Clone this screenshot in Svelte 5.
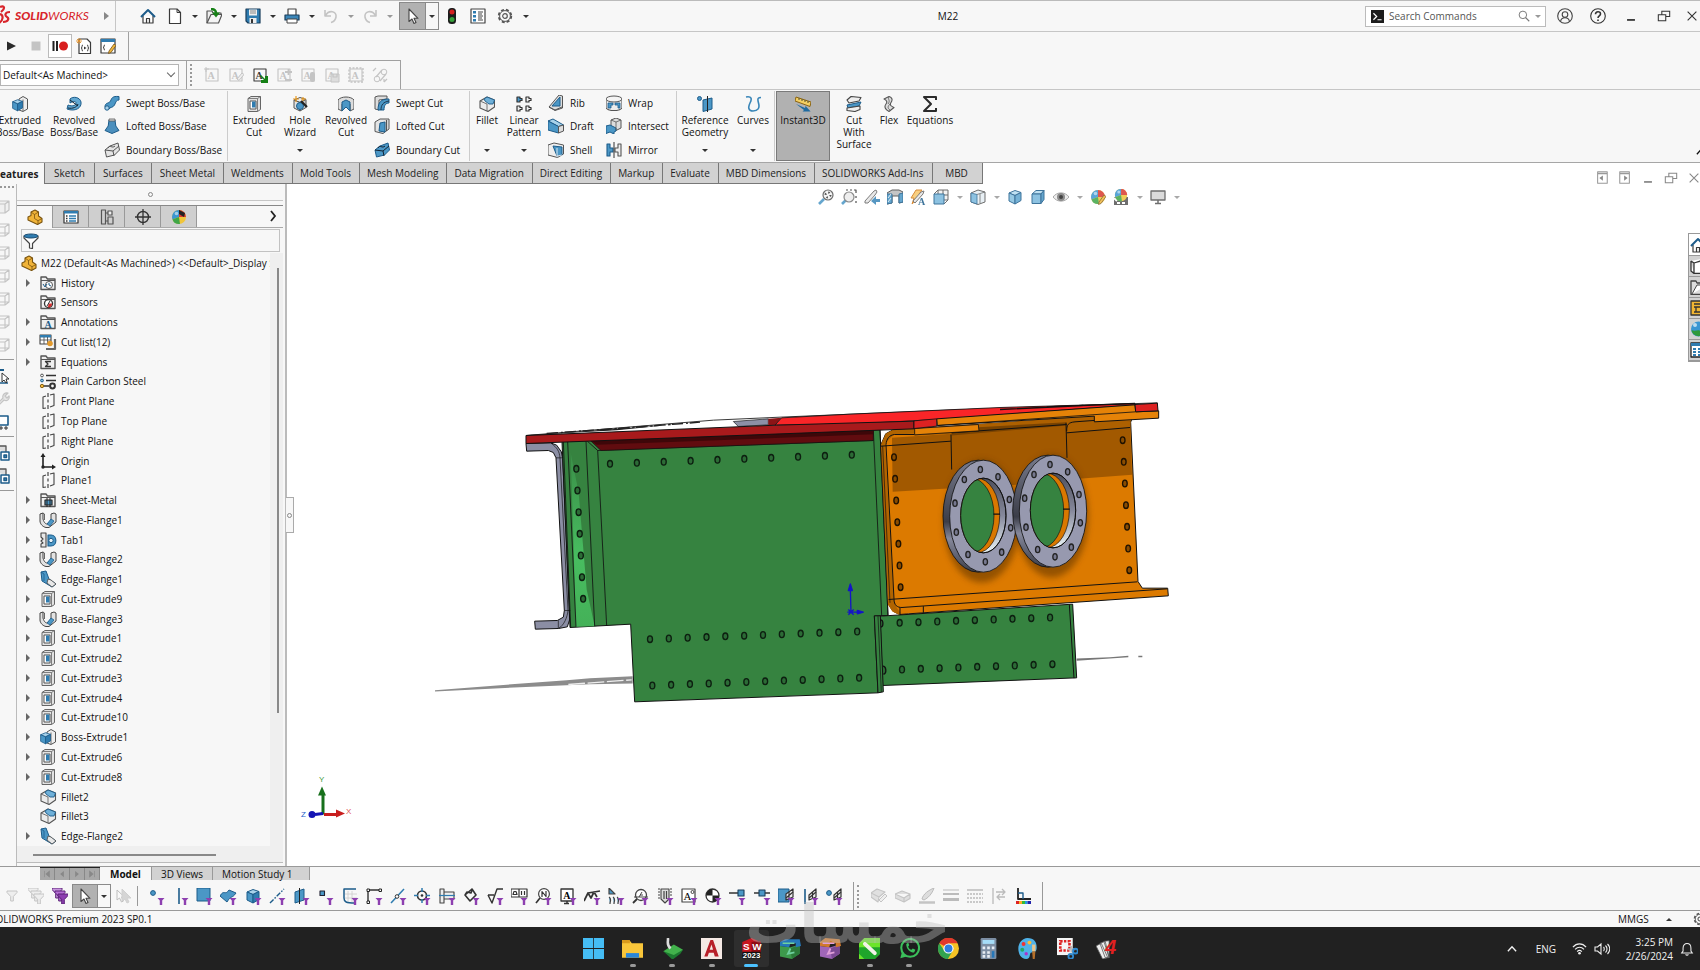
<script>
  const K = '#3a3a3a', B = '#4b97c6', D = '#1d5c8a', L = '#a8d2ea', G = '#c4c4c4', P = '#8d3fb0';
  const s = (d, c = K, w = 1.2, f = 'none') => `<path d="${d}" fill="${f}" stroke="${c}" stroke-width="${w}" stroke-linejoin="round"/>`;
  const cube = (a, b, c, o = K) => s('M2 5l4-3.500h8l-3 3.500z', o, 1, a) + s('M2 5h9v9.500H2z', o, 1, b) + s('M11 5l3-3.500v9l-3 4z', o, 1, c);
  const hex = (a, b, c, o = K) => s('M2 4l6-2.500 6 2-6 3z', o, 1, a) + s('M2 4l6 2.500v8.500l-6-3z', o, 1, b) + s('M8 6.500l6-3v8l-6 3.500z', o, 1, c);
  const fun = `<path d="M9.500 10h7l-2.300 2.600V17h-2.400v-4.400z" fill="${P}"/>`;
  const funnel = (x, y, c, f, k = 1) => `<path transform="translate(${x} ${y}) scale(${k})" d="M0 0h10v1.500L6.300 5.500V10H3.700V5.500L0 1.500z" fill="${f}" stroke="${c}" stroke-width="1"/>`;
  const folder = s('M1 14.500V2h5l1.500 2H15v10.500z', '#555', 1.4, '#efefef') + s('M1 5.500h14', '#555', 1);
  const ball = '<circle cx="8" cy="8" r="7" fill="#f0c53a"/><path d="M8 8V1a7 7 0 0 0-6.500 9.500z" fill="#3b96d2"/><path d="M8 8l-6.500 2.500A7 7 0 0 0 9 15z" fill="#3fa648"/><path d="M8 8V1a7 7 0 0 1 7 7z" fill="#d93a30"/><circle cx="5.500" cy="4.500" r="1.800" fill="#ffffff88"/>';
  const pencil = s('M9 13l5-7 2 1.500-5 7-2.500 1z', '#75531a', 0.8, '#f0b63c');
  const part = s('M1 8l3-1.500V3L8 1l3.500 2v4L15 9.500v3.500L10.500 15.500 1 11z', '#7a5410', 1.1, '#f0b338') + s('M4 3l3.500 2.500v4l3.500 2.200v3.600M7.500 5.500l4-2.500M11 11.700l4-2.200', '#7a5410', 0.8);
  const letterA = (c) => s('M2 2h12v12H2z', c, 1.1) + `<text x="3.500" y="12" font-size="10" font-family="Liberation Serif" font-weight="bold" fill="${c}">A</text>`;
  const ic = {
    home: s('M3 8v7h10V8M6.500 15v-4.500h3V15', K, 1.2, '#fff') + s('M1 9l7-7 7 7', D, 2),
    doc: s('M2.500 1h7.500l3.500 3.500V15.500h-11z', K, 1.2, '#fff') + s('M10 1v3.500h3.500', K, 1),
    open: s('M1 15V3h5l1 2h8v2', '#555', 1.2, '#eee') + s('M1 15l4-8.500h11L12.500 15z', '#555', 1.2, '#f4f4f4') + s('M5 1c4 0 5 2 5 4', '#168016', 2.4) + '<path d="M6 4.500h8l-4 5z" fill="#168016"/>',
    save: s('M1 1h14v14H3L1 13z', '#1a3e5c', 1.2, '#2f7cb0') + '<path d="M4 1.500h8v6H4zM4.500 10h7v5h-7z" fill="#eee"/><path d="M5 3h6M5 5h6" stroke="#888"/><path d="M6 11h2v4H6z" fill="#333"/>',
    print: s('M4 7V1h8v6', '#444', 1.2, '#fff') + s('M1 7h14v5H1z', '#1a3e5c', 1.2, '#3b86b8') + s('M3 11h10v4H3z', '#444', 1, '#fff'),
    undo: s('M2 2v6h6M2.500 7.500C6 1.500 14 3 13 9c-.5 3-3 5-5 5.500', G, 1.600),
    redo: s('M14 2v6H8M13.500 7.500C10 1.500 2 3 3 9c.5 3 3 5 5 5.500', G, 1.600),
    cursor: s('M4 1v12.500l3-2.500 2 4.500 2-1-2-4.200h4z', '#444', 1.1, '#fff'),
    traffic: '<rect x="4" y="0" width="8" height="16" rx="3.500" fill="#1c1c1c"/><circle cx="8" cy="4" r="2.500" fill="#d42020"/><circle cx="8" cy="11.500" r="2.500" fill="#36a23a"/>',
    options: s('M1 1h14v14H1z', '#444', 1.2, '#fff') + '<path d="M3 3h3v2.500H3zM3 7h3v2.500H3zM3 11h3v2.500H3z" fill="#2f7cb0"/><path d="M8 4h5M8 8h5M8 12h5M8 6h4M8 10h4" stroke="#444"/>',
    gear: '<circle cx="8" cy="8" r="6.200" fill="none" stroke="#555" stroke-width="2" stroke-dasharray="2.900 2"/><circle cx="8" cy="8" r="5.400" fill="#f7f7f7" stroke="#555"/><circle cx="8" cy="8" r="2.300" fill="none" stroke="#555" stroke-width="1.200"/>',
    play: '<path d="M3 3.500l9 4.500-9 4.500z" fill="#2b2b2b"/>', stop: '<path d="M3.500 3.500h9v9h-9z" fill="#c4c4c4"/>',
    rec: '<path d="M1.500 3v10M5 3v10" stroke="#222" stroke-width="2"/><circle cx="11.500" cy="8" r="4.500" fill="#d81f1f"/>',
    macroNew: s('M3 1h8l3.500 3.500V15.500H3z', K, 1.2, '#fff') + s('M7 7c-2 0 0 3-2 3 2 0 0 3 2 3M11 7c2 0 0 3 2 3-2 0 0 3-2 3', K, 1) + '<path d="M8 8.500l2.500 1.500L8 11.500z" fill="#333"/><path d="M3 0v6M0 3h6M1 1l4 4M5 1L1 5" stroke="#e0902a" stroke-width=".9"/>',
    macroEdit: s('M1 1h14v14H1z', K, 1.2, '#fff') + '<path d="M1 1h14v3H1z" fill="#2f7cb0"/>' + s('M5 7c-2 0 0 2.500-2 2.500 2 0 0 2.500 2 2.500', K, 1) + pencil,
    aNew: letterA(G) + s('M2 0v5M0 2h5', G, 1), aEdit: letterA(G) + s('M9 12l5-6 2 1.500-5 6z', G, 1, '#eee'),
    aGo: letterA(K) + '<path d="M9 8l4 4v-3h3v7H9v-3h3L8 9z" fill="#158015"/>',
    aAdd: letterA(G) + s('M9 5h7M12.500 2v6M9 13h7', G, 1.800), aLight: letterA(G) + `<rect x="10" y="5" width="5" height="10" rx="2" fill="${G}"/>`,
    aSave: letterA(G) + s('M7 7h8v8H7z', G, 1, '#ddd') + s('M9 7v3h4V7', G), aBox: letterA(G) + s('M1 1h14v14H1z', G, 1.400).replace('stroke-width', 'stroke-dasharray="2 1.500" stroke-width'),
    aLink: s('M4 10l6-7M8 14l6-7M1 4l3-3M12 15l3-3M12 15v-3', G, 1.200) + '<circle cx="5" cy="12" r="2.800" fill="none" stroke="#c4c4c4"/><circle cx="12" cy="5" r="2.800" fill="none" stroke="#c4c4c4"/>',
    boss: s('M7 3l4-2.500L15.500 3v10L11 15.500 7 14z', '#555', 1, '#eee') + s('M11 3.500V15', '#555', .8) + `<g transform="translate(-1 2.500) scale(.82)">${hex(L, B, '#2f7cb0', D)}</g>`,
    revBoss: s('M4 3C7 0 14 1 15 6c1 6-6 10-14 7l1-4c5 2 8 0 8-2s-3-2-6 0z', D, 1, '#62a8d2') + s('M4 4l8 6M2 12c5 1 9-1 10-4', '#123', 1),
    sweep: s('M1 12c0-5 4-3 5.500-6S8 1 15 1.500V5c-3 0-3 2-4.500 5s-5 2-5.500 4z', D, 1, '#4b97c6') + '<circle cx="3" cy="13" r="2.200" fill="#a8d2ea" stroke="#1d5c8a"/>',
    loft: s('M5 2h6l.8 6 3.200 4.500L8 15.500 1 12.500 4.200 8z', D, 1, '#4b8fbd') + s('M5 1h6v2H5z', '#555', .8, '#ddd'),
    bound: s('M1 8l5-4 8-3 1.500 7-5 5-8 2z', '#555', 1, '#e4e4e4') + s('M1 8l8 1 6-5M9 9l1 5M4 6c2-4 4 1 7-2', '#555', 1),
    boundCut: s('M1 8l5-4 8-3 1.500 7-5 5-8 2z', D, 1, '#4b97c6') + s('M1 8l8 1 6-5M9 9l1 5M4 6c2-4 4 1 7-2', '#123', 1),
    cut: s('M2 2.500L5 .5h9.500v13l-3 2H2z', '#666', 1, '#e2e2e2') + s('M2 2.500h9.500v13M11.500 2.500l3-2', '#666', .8) + s('M4 5h6v8H4z', '#555', 1, '#fff') + '<path d="M6 5.500h3.500v6H6z" fill="#2f7cb0"/>',
    hole: hex('#eee', '#e2e2e2', '#d0d0d0', '#555') + '<circle cx="8" cy="10" r="3.500" fill="#4b97c6" stroke="#1d5c8a"/><path d="M9 5l6 6" stroke="#222" stroke-width="2.200"/><path d="M4 0v6M1 3h6M11 1v4M9 3h5" stroke="#e79a22" stroke-width="1.200"/>',
    revCut: s('M0 4c3-4 13-4 16 0v9l-4 2V8H4v7l-4-2z', '#555', 1, '#dcdcdc') + s('M4 6l4-2 4 2v9l-4-4-4 4z', D, 1, B),
    sweepCut: s('M1 2l3-1h9v3L5 5v10l-4-1z', '#555', 1, '#ddd') + s('M4 15C4 7 7 4 15 4v4c-3 0-5 2-5 7z', D, 1, B) + s('M7 15c0-5 2-8 8-9', '#123', .8),
    loftCut: s('M1 4l5-3h9v10l-6 4.500-8-2z', '#555', 1, '#e4e4e4') + s('M6 5l5-1v10l-6-1z', D, 1, B) + s('M12.500 2v11', '#555'),
    fillet: s('M1 5l7-4 7.500 3v7L9 15.500 1 12z', '#555', 1.1, '#ececec') + s('M1 5l7 3v7', '#555', .8) + s('M5 3l3-2 7.500 3-1.500 4-4 0-4-3z', D, .9, '#6fb0d8'),
    pattern: [[0, 0, B], [9, 0, '#eee'], [0, 9, '#eee'], [9, 9, '#eee']].map(([x, y, f]) => `<g transform="translate(${x} ${y})">${s('M1 1h3v1.500h2v2H4V6H1z', '#333', 1.2, f)}</g>`).join(''),
    rib: s('M1 12L11 0l3.500 1v12L7 15.500z', '#555', 1, '#ddd') + s('M4 11l8-9v9z', D, 1, B) + s('M1 12l6 3 7-3', '#555', 1),
    draft: s('M0 3l5-2 10.500 6-5 1.500z', D, 1, L) + s('M0 3l10.500 5.500V15L0 12z', D, 1, B) + s('M10.500 8.500l5-1.500v6l-5 2z', '#555', 1, '#ddd'),
    shell: s('M0 3l6-2 9.500 2v9l-6 3.500L0 13z', '#555', 1, '#eee') + s('M5 4l9 1v8l-5 1z', D, 1, B) + s('M9 6v8l5-1', '#fff', .8),
    wrap: s('M0 4v9c3 3.500 13 3.500 16 0V4', '#555', 1.1, '#ececec') + '<ellipse cx="8" cy="4" rx="8" ry="3" fill="#f4f4f4" stroke="#555"/>' + s('M2 8h5v2H5v3H2zM9 8h5v5h-2v-3H9z', D, .8, B),
    intersect: s('M5 2l5-2 5 2v8l-5 2.500L5 10z', '#555', 1, '#ddd') + s('M0 8l4-1 6 3v3l-2 1v2l-4-2-4 1.500z', D, 1, B) + s('M10 4v8M5 2l5 2 5-2', '#555', .8),
    mirror: s('M1 2h3v4h3v4H4v4H1z', D, 1.1, B) + s('M15 2h-3v4h-3v4h3v4h3z', '#555', 1.1, '#eee') + s('M8 0v16', '#333', 1),
    refgeo: s('M6 4l9-2v11l-9 2.500z', D, 1, B) + s('M10.500 0v16', '#222', 1) + '<circle cx="2.500" cy="2.500" r="2" fill="#4b97c6" stroke="#1d5c8a"/>',
    curves: s('M1 1c6-1 6 2 4 6s-2 8 3 8 7-3 5.500-8 0-5.500 2.500-5.500', '#3a86b8', 1.600),
    instant: s('M1 1l15 5-1 4.500L0 5z', '#8a6414', 1, '#f4cf62') + s('M4 2v2M7 3v2M10 4v2M13 5v2', '#553', 1) + '<path d="M1 8l9 4 .6-2 5 5.500H7.500l1.500-1.500z" fill="#1f6aa0"/>',
    cutSurf: s('M1 4l4-3.500 10 1L13 5 3 7z', '#444', 1.1, '#eee') + s('M1 9l14-3-2 4-11 2z', D, 1, B) + s('M1 12l13-2v3.500l-5 2-8-1z', '#444', 1.1, '#eee'),
    flex: s('M3 3l5-2.500c3 1 4 3 2 6s1 4 3 5l-5 4c-4-2-5-5-3-7.500S5 4 3 3z', '#555', 1.1, '#ddd') + s('M8 1c-2 2 2 3-1 7M9 14c-3-2-2-4 0-6', '#555', .8),
    sigma: s('M14 4V1H2l7 7-7 7h12v-3', '#2b2b2b', 2),
    zoomFit: s('M1 15l5-5', B, 2.600) + '<circle cx="10" cy="6" r="5" fill="#f3f3f3" stroke="#555" stroke-width="1.200"/><circle cx="10" cy="6" r="2.500" fill="none" stroke="#333" stroke-width="2" stroke-dasharray="1.500 2.400"/>',
    zoomArea: s('M1 15l4-4', B, 2.600) + '<circle cx="8" cy="8" r="5" fill="#ececec" stroke="#777" stroke-width="1.200"/>' + s('M5 1h2M9 1h2M13 1h2v3M15 7v2M15 12v2', '#333', 1.2),
    prev: s('M1 12l9-10 2-1 1 2-2 3-7 8-3 0z', '#666', 1, '#e4e4e4') + '<path d="M16 10h-4V7l-5 5 5 4v-3h4z" fill="#3a86b8"/>',
    section: s('M0 4l5-3h7l4 2v10l-4 1V7H5v7l-5 1z', '#444', 1, '#bbb') + s('M0 5h5v9l-5 1zM12 5l4-1v9l-4 1z', D, 1, B) + s('M1 9l3-4M1 13l3-4', '#fff', .8),
    annot: s('M6 1h6l-3 4h4L2 15l2-6H1z', '#d07818', 1, '#f8c76a') + s('M3 12l8-9 3-1-1 3-8 9z', '#666', 1, '#e4e4e4') + `<text x="8" y="16" font-size="10" font-family="Liberation Serif" font-weight="bold" fill="${D}">A</text>`,
    orient: s('M5 1h10v10H5z', '#555', 1, '#f0f0f0') + s('M10 1v10M5 6h10M1 5l4-4M11 15l4-4', '#555', 1) + s('M1 5h10v10H1z', D, 1, '#7ab8dc'),
    display: s('M1 4l7-3 7 2v10l-7 2.500L1 13z', '#555', 1, '#e4eef4') + s('M1 4l6 1.500V15L1 13z', D, .8, '#7ab8dc') + s('M7 5.500L15 3M10 5v9', '#555', .8),
    hexBlue: hex('#b6dcf0', '#86c0e0', '#5fa5cf', D), cubeBlue: cube('#b6dcf0', '#7ab8dc', '#4b97c6', D),
    eye: s('M0 8c4-5.500 12-5.500 16 0-4 5.500-12 5.500-16 0z', '#999', 1, '#e8e8e8') + '<circle cx="8" cy="8" r="4" fill="#777"/><circle cx="8" cy="8" r="2" fill="#222"/>',
    ballEdit: ball + pencil, ball: ball + '<path d="M8 1l6 3-1 4-5-3z" fill="#222"/>', ballScene: '<path d="M1 8h14v8H1z" fill="#555"/><path d="M1 9l3 3M4 14h3M9 14h3" stroke="#fff" stroke-width="2"/>' + `<g transform="translate(1 -1) scale(.88)">${ball}</g>`,
    monitor: s('M1 2h14v9H1z', '#555', 1.3, '#d5d5d5') + s('M8 11v3M5 14.500h6', '#555', 1.500),
    part, propTab: s('M1 2h14v12H1z', '#333', 1.2, '#fff') + '<path d="M1 2h14v2.500H1z" fill="#2f7cb0"/><path d="M6 7h7M6 9.500h7M6 12h7" stroke="#2f7cb0" stroke-width="1.300"/><path d="M3 7h1.500M3 9.500h1.500M3 12h1.500" stroke="#333" stroke-width="1.300"/>',
    configTab: s('M2.500 1h4v14h-4zM6.500 4H9M6.500 12H9M9 8h5v7H9z', '#555', 1.2) + s('M9 2h4v4H9z', '#555', 1.200, '#eee'),
    target: '<circle cx="8" cy="8" r="5.500" fill="none" stroke="#333" stroke-width="1.400"/>' + s('M0 8h16M8 0v16', '#333', 1.300),
    history: folder + '<circle cx="9" cy="10" r="3.500" fill="#fff" stroke="#555"/>' + s('M9 8v2l2 1M3 9l2 3 2-3', D, 1),
    sensor: folder + '<circle cx="8.500" cy="9.500" r="4" fill="#fff" stroke="#333" stroke-width="1.300"/><path d="M8.500 9.500l3.500 0a4 4 0 0 1-4 4z" fill="#d83030"/><path d="M7 12l3-5" stroke="#333"/>',
    annotF: folder + `<text x="4.500" y="13.500" font-size="10" font-family="Liberation Serif" font-weight="bold" fill="${D}">A</text>`,
    eqF: folder + s('M11 7.500H5.500L8 10l-2.500 2.500H11', '#333', 1.300),
    cutlist: s('M0 1h11v9H0z', '#444', 1.1, '#fff') + '<path d="M0 1h11v2.500H0z" fill="#2f7cb0"/>' + s('M0 6h11M4 3v7M7.500 3v7', '#444', .8) + s('M15 5v10H6', '#666', 2.200) + '<circle cx="10" cy="9.500" r="2.800" fill="#e39a2c"/>',
    material: '<path d="M6 2.500h10M6 7.500h10M4 13h5" stroke="#333" stroke-width="1.600"/><circle cx="2" cy="2.500" r="1.400" fill="#fff" stroke="#555"/><circle cx="2" cy="7.500" r="1.400" fill="#8cc3e2" stroke="#1d5c8a"/><circle cx="2" cy="13" r="1.700" fill="#f0b63c" stroke="#8a6414"/><circle cx="12.500" cy="13" r="2.400" fill="none" stroke="#333" stroke-width="2"/>',
    plane: s('M6 15l-3 .5V4l3-1M10 2l4-1v11.500l-4 1.500', '#444', 1.1) + s('M8 0v4M8 6.500v3M8 12v4', '#444', 1.2),
    origin: s('M3 2v12h11', '#222', 1.600) + '<path d="M3 0l2.500 4h-5zM16 14l-4-2.500v5z" fill="#222"/><circle cx="3" cy="14" r="1.700" fill="#222"/>',
    sheet: folder + s('M5 8h7v5H5z', '#222', 1.2, B) + s('M7 6v9M10 6v9', '#222', 1),
    base: s('M0 2l3-1v6c1 4 3 5 4 5l4-3V2l3-1 2 1v8l-7 5.500H6C3 15 0 12 0 9z', '#444', 1, '#e2e2e2') + s('M7 12l4-5 3 2-4 5z', D, .8, B) + s('M3 1l1.500 1v6', '#444', .8),
    tab: s('M1 1h5v14H1V12l2-1-2-2 2-2-2-2z', '#444', 1.1, '#e8e8e8') + s('M8 3h3c6.500 0 6.500 11 0 11H8z', D, 1.1, B) + '<circle cx="11" cy="8.500" r="2.200" fill="#e8f2f8" stroke="#1d5c8a"/>',
    edge: s('M1 1l5-1 3 8 7 5-4 3-10-6z', D, 1, B) + s('M8 8l3 1 5 4-4 3-5-4z', '#555', .9, '#e8e8e8') + s('M1 1l3 2v7', D, .8),
    filterAll: funnel(3, 3, G, '#eee'), filterMany: funnel(0, 0, G, '#eee') + funnel(3, 3, G, '#eee') + funnel(6, 6, G, '#eee'),
    filterPurple: funnel(0, 0, '#5c2278', '#c795dd') + funnel(3, 3, '#5c2278', '#b56fd4') + funnel(6, 6, '#5c2278', P),
    cursors: `<g opacity=".35">${s('M2 2v10l2.500-2 2 4 2-1-2-4h3z', '#555', 1, '#fff') + s('M7 1v12l3-2 2 4 2-1-2-4h4z', '#888', 1, '#999')}</g>`,
    fVertex: '<circle cx="5" cy="5" r="2.400" fill="#4b97c6" stroke="#1d5c8a"/>' + fun, fEdge: s('M7 0v16', D, 1.600) + fun,
    fFace: s('M1 0h13v13H1z', D, 1, B) + fun, fSurf: s('M0 8c4-7 5 0 9-6l7 3c-4 6-5 2-9 9z', D, 1, B) + fun,
    fBody: hex(L, B, '#2f7cb0', D) + fun, fAxis: s('M1 15L15 1', D, 1.400).replace('stroke-width', 'stroke-dasharray="5 1.500 1.500 1.500" stroke-width') + fun,
    fPlane: s('M2 4l9-3v11l-9 3z', D, 1, B) + s('M6.500 0v16', '#222', 1) + fun, fPoint: s('M3 3h4.500v4.500H3z', '#223', 1.100, B) + fun,
    fSketch: s('M6 3v11M10 3v11M3 6h12M3 10h12', '#ccc', .8) + s('M14 1H2v9c0 4 2 5 11 5', D, 1.500) + fun,
    fSeg: s('M2 2h12M2 2v12', '#333', 1.400) + s('M1 1h2.500v2.500H1zM13 1h2.500v2.500H13zM1 13h2.500v2.500H1z', '#222', 1, '#fff') + fun,
    fMid: s('M1 15L14 1', '#2f7cb0', 1.500) + '<circle cx="7" cy="8.500" r="1.800" fill="#fff" stroke="#333"/>' + fun,
    fCenter: '<circle cx="8" cy="7.500" r="4.500" fill="none" stroke="#333" stroke-width="1.600"/>' + s('M0 7.500h4M12 7.500h4M8 0v4M8 11v4', '#2f7cb0', 1.500) + '<circle cx="8" cy="7.500" r="1.300" fill="#333"/>' + fun,
    fDim: s('M1 1h4v14H1zM5 4h10v7H5z', '#444', 1.1, '#eee') + s('M0 7.500h16', '#2f7cb0', 1.200) + fun,
    fWeld: s('M2 7l5 6 6-6-4-6zM2 7l2-3 4 1 1-3', '#333', 1.600) + fun, fSurfFin: s('M1 7l4 8L10 1h6M1 7h6', '#333', 1.400) + fun,
    fTol: s('M0 1h16v8H0zM8 1v8', '#333', 1.2, '#fff') + s('M2 6.500h4l-1-3H3zM10.500 3v4M13.500 3v4', '#333', 1.200) + fun,
    fNote: s('M1 15l4-5', '#333', 1.700) + '<circle cx="9" cy="6" r="5.400" fill="#fff" stroke="#444" stroke-width="1.200"/>' + s('M7 9V3.500l4 5V3', '#333', 1.200) + fun,
    fA: s('M1 1h12v12H1z', '#333', 1.3, '#fff') + '<text x="3.200" y="11" font-size="10" font-family="Liberation Serif" font-weight="bold">A</text>' + s('M4 15.500h5M7 13v2', '#333', 1.500) + fun,
    fBead: s('M0 13l4-8 3 5 3-6 3 5M4 5l12-2', '#333', 1.700) + fun, fCos: s('M1 0v6h6zM1 9c3 2 1 4 1 7M5 9c3 2 1 4 1 7M9 9c3 2 1 4 1 7', '#444', 1.2, B) + fun,
    fZoomA: s('M1 15l4-4', '#333', 1.800) + '<circle cx="9" cy="7" r="5.500" fill="#fff" stroke="#444" stroke-width="1.300"/>' + s('M2 9h14M10 4l-3 5M8 7h3', '#444', 1) + fun,
    fDowel: s('M4 1h8v10l-4 4-4-4z', '#444', 1.1, '#ddd') + s('M1 1h2M1 4h2M1 7h2M1 10h2M13 1h2M13 4h2M13 7h2M7 3v8M9.500 3v8', '#444', 1.200) + fun,
    fDatum: s('M1 1h13v13H1z', '#444', 1.200, '#fff') + '<text x="2.500" y="12" font-size="11" font-family="Liberation Serif">A</text><circle cx="11.500" cy="4" r="1.500" fill="none" stroke="#444"/>' + fun,
    fMass: '<circle cx="7.500" cy="7.500" r="6.500" fill="#fff" stroke="#333" stroke-width="1.300"/><path d="M7.500 7.500V1a6.500 6.500 0 0 0-6.500 6.500zM7.500 7.500V14A6.500 6.500 0 0 0 14 7.500z" fill="#222"/>' + fun,
    fConn: s('M0 5h9', '#333', 1.500) + s('M9 2h6v6H9z', '#1a3e5c', 1.100, B) + fun, fConn2: s('M0 5h16', '#333', 1.500) + s('M5 2h6v6H5z', '#1a3e5c', 1.100, B) + fun,
    fWedge: s('M0 1h11v13H0z', D, 1, B) + s('M8 6l7-5v8l-7 3z', '#333', 1.200, '#eee') + s('M8 10l7-6M11 4v7', '#333') + fun,
    fWedge2: s('M3 1v15', D, 1.600) + s('M7 7l7-6v8l-7 3z', '#333', 1.200, '#eee') + s('M7 10l7-6M10.500 4v6', '#333') + fun,
    fWedge3: '<circle cx="3" cy="5" r="2.400" fill="#4b97c6" stroke="#1d5c8a"/>' + s('M8 7l7-6v8l-7 3z', '#333', 1.200, '#eee') + s('M8 10l7-6M11.500 4v6', '#333') + fun,
    gBoxEdit: s('M0 5l6-4 8 3-6 5zM0 5v4l7 5 1-5', G, 1.1, '#e0e0e0') + s('M8 12l6-6 2 2-6 6z', G, 1, '#eee'), gBox: s('M0 6l7-3 8 3-6 4zM0 6v4l9 4 6-3.500V6M9 10v4', G, 1.1, '#dedede'),
    gBrush: s('M3 11c1-5 7-9 12-11-2 6-6 10-10 12z', '#bbb', 1, '#ddd') + s('M0 14.500h16', G, 2.500), gLines: s('M0 2h16', '#bbb', 1) + s('M0 6h16', '#bbb', 2) + s('M0 11.500h16', '#bbb', 3),
    gDash: s('M0 2h16', '#bbb', 1.500) + s('M0 6h16M0 10h16M0 14h16', '#bbb', 1.500).replace('stroke-width', 'stroke-dasharray="2 1" stroke-width'), gSwap: s('M2 0v16M5 4h9M11 1l3 3-3 3M14 9H6M9 6L6 9l3 3', '#bbb', 1.300),
    colorAxis: s('M3 0v11h13', '#222', 1.800) + s('M3 5h5v6', D, 1.400) + '<path d="M1 13h3v3H1z" fill="#d22"/><path d="M4 13h3v3H4z" fill="#fa2"/><path d="M7 13h3v3H7z" fill="#3b3"/><path d="M10 13h2.500v3H10z" fill="#29d"/><path d="M12.500 13H16v3h-3.500z" fill="#22a"/>',
    wire: s('M1 5l4-3h10v9l-4 3H1zM1 5h10v9M11 5l4-3', G, 1.2, '#f0f0f0'), wire2: s('M1 5h10v9H1zM5 2h10v9H5zM1 5l4-3M11 5l4-3M11 14l4-3M1 14l4-3', G, 1.1),
    sel: s('M1 2h9', D, 2) + s('M1 15h13', D, 1.500) + s('M8 5v9l2-2 2 3 1-1-1-3h3z', '#333', 1, '#fff'), wrench: s('M2 14l7-7c-1-3 2-6 5-5l-3 3 2 2 2-2c1 3-2 6-5 4l-6 6z', G, 1.200, '#e6e6e6'),
    screen: s('M0 2h14v9H0z', D, 1.600, '#fff') + s('M6 13h2v2H6zM11 13h2v2h-2z', '#333', 1), box2: s('M2 4l3-3h7v6M2 4v8h4', '#555', 1.3, '#ddd') + s('M7 7h8v8H7z', D, 1.500, '#fff') + s('M10 10h2.500v2.500H10z', D, 1.500, B),
    library: s('M1 3l3 2v10.500h11V4l-4-3M4 5l6-2 5 1M1 3v10l3 2.500', '#333', 1.3, '#fff'), folderOpen: s('M1 15.500V2h5l1 2h9v11.500z', '#444', 1.3, '#ddd') + s('M2 15l5-9h10', '#444', 1, '#fff'),
    palette: s('M1 1h14v14H1z', '#333', 1.300, '#f2b632') + s('M4 4h8M4 7h8M6 7v5M4 12h8', '#333', 1.300), globe: '<circle cx="8.500" cy="8" r="7.500" fill="#3b96d2"/><path d="M1.500 9c4 2 6-1 9 1s4-2 5 0c-1 7-13 7-14-1z" fill="#2e9a3c"/><circle cx="5" cy="4" r="2" fill="#ffffffaa"/>',
    table: s('M1 1h14v14H1z', '#222', 1.300, '#fff') + '<path d="M1 1h14v3H1z" fill="#2f7cb0"/><path d="M3 6h3v2H3zM8 6h3v2H8zM3 9h3v2H3zM8 9h3v2H8zM3 12h3v2H3zM8 12h3v2H8z" fill="#2f7cb0"/>',
    glass: '<circle cx="6.500" cy="6.500" r="5" fill="none" stroke="#777" stroke-width="1.300"/><path d="M10 10l5 5" stroke="#777" stroke-width="1.500"/>',
    prompt: '<path d="M0 0h16v16H0z" fill="#1c1c1c"/><path d="M3 4l4 4-4 4M8 12h5" fill="none" stroke="#fff" stroke-width="1.500"/>',
    user: '<circle cx="8" cy="8" r="7.300" fill="none" stroke="#444" stroke-width="1.100"/><circle cx="8" cy="6.500" r="2.800" fill="none" stroke="#444" stroke-width="1.100"/><path d="M3.500 13.500c1-5 8-5 9 0" fill="none" stroke="#444" stroke-width="1.100"/>',
    help: '<circle cx="8" cy="8" r="7.300" fill="none" stroke="#333" stroke-width="1.100"/><path d="M5.500 6.300c0-3.500 5-3.300 5-.4 0 2-2.500 1.800-2.500 4M8 11.500v1.600" fill="none" stroke="#333" stroke-width="1.600"/>',
    min: '<path d="M3.500 12.500h9" stroke="currentColor" stroke-width="2"/>', restore: '<path d="M5.500 6V2.500h9v6H10M1.500 6.500h8.500v7H1.500z" fill="none" stroke="currentColor" stroke-width="1.200"/>',
    close: '<path d="M3 3l10 10M13 3L3 13" stroke="currentColor" stroke-width="1.300"/>',
    paneL: s('M3 1h11v13H3zM3 3h11', '#999', 1.2) + '<path d="M9 5v6L5 8z" fill="#888"/>', paneR: s('M2 1h11v13H2zM2 3h11', '#999', 1.2) + '<path d="M7 5v6l4-3z" fill="#888"/>',
    funnel: s('M1 3v2l5.500 5.500V15l3 .5v-5L15 5V3z', '#444', 1.200, '#fff') + '<ellipse cx="8" cy="3" rx="7" ry="2" fill="#2f7cb0" stroke="#1d4e73"/>',
    win: '<path d="M0 0h7.700v7.700H0zM8.300 0H16v7.700H8.300zM0 8.300h7.700V16H0zM8.300 8.300H16V16H8.300z" fill="#45bdf5"/>',
    explorer: '<path d="M0 2h6l1.500 2H16v11H0z" fill="#f9c63a"/><path d="M0 1.500h6V4H0z" fill="#d99a1c"/><path d="M3 15v-3.500h10V15z" fill="#2c87d8"/>',
    green: '<path d="M1 10l8-5 7 4-7 6z" fill="#42b24c"/><path d="M1 10l8 3 7-4-2 3-6 4.500z" fill="#1d7a30"/><path d="M6.500 8C3 5 5 3 4.500 0" stroke="#ddd" stroke-width="2" fill="none"/>',
    acad: '<path d="M0 0h16v16H0z" fill="#f5e9e4"/><path d="M2.500 14L7.200 1.500h2L13.500 14h-3l-.8-2.700H6L5 14z" fill="#b81f28"/><path d="M6.600 9h2.600L8 5z" fill="#f5e9e4"/>',
    sw: '<path d="M1 3l7-3 7 3v8l-5 3-9-2z" fill="#c8151f"/><path d="M8 3l7-1v9l-5 3-2-3z" fill="#8d0c14"/><text x="1.500" y="9" font-size="7.500" font-weight="bold" font-family="Liberation Sans" fill="#fff">S W</text><path d="M1 10.500h14v5H1z" fill="#111"/><text x="1.400" y="15.300" font-size="6" font-weight="bold" font-family="Liberation Sans" fill="#fff">2023</text>',
    app1: '<path d="M0 6l8 1 7-2v7l-6 4-9-2z" fill="#3d9a4c"/><path d="M8 8l7-3v7l-6 4z" fill="#2c7a3a"/><path d="M0 3l4-2 11 0 1 5-4 1 0-3-4 0-1 3-7-1z" fill="#2577b8"/><path d="M2 4h9M8 8l-2 4 5-1" fill="none" stroke="#6fd0a0" stroke-width="1.300"/>',
    app2: '<path d="M0 6l8 1 7-2v7l-6 4-9-2z" fill="#a066b8"/><path d="M8 8l7-3v7l-6 4z" fill="#7c4a94"/><path d="M0 3l4-3 11 1 1 5-4 1 0-3-4 0-1 3-7-1z" fill="#d0792c"/><path d="M2 4h9M8 8l-2 4 5-1" fill="none" stroke="#e0a0d8" stroke-width="1.300"/>',
    camt: '<path d="M0 4l4-4h12v12l-4 4H0z" fill="#6be52a"/><path d="M0 7h16v5l-4 4H4l-4-4z" fill="#1fa52b"/><path d="M4.500 4.500l7.500 7" stroke="#f2f2e8" stroke-width="3" stroke-linecap="round"/>',
    whats: '<circle cx="8.500" cy="7.500" r="6.800" fill="#1d1d1d" stroke="#3bbf5b" stroke-width="1.600"/><path d="M1 15.500l1.300-5 3.500 3.500z" fill="#3bbf5b"/><path d="M5.500 4.500c0 4 3 6.500 6 6.500l1-2-2-1-1 1c-1 0-2.500-1.500-2.500-2.500l.8-1-.8-2z" fill="#3bbf5b"/>',
    chrome: '<circle cx="8" cy="8" r="8" fill="#f6c324"/><path d="M8 8L1 4a8 8 0 0 1 14 0H8z" fill="#e2382c"/><path d="M1 4a8 8 0 0 0 6.500 12l3.500-6-6 0z" fill="#32a350"/><circle cx="8" cy="8" r="3.900" fill="#fff"/><circle cx="8" cy="8" r="3" fill="#2f7de0"/>',
    calc: '<rect x="2" y="0" width="12" height="16" rx="1" fill="#7c8ea3"/><path d="M3.500 1.500h9v3h-9z" fill="#a5dcf7"/><path d="M3.500 6.500h2v2h-2zM7 6.500h2v2H7zM10.500 6.500h2v2h-2zM3.500 10h2v2h-2zM7 10h2v2H7zM3.500 13h2v2h-2zM7 13h2v2H7z" fill="#e8eef5"/><path d="M10.500 10h2v5h-2z" fill="#2677b8"/>',
    paint: '<path d="M8 0c5 0 7 3 7 7s-2 4-4 4 0 5-4 5-6-4-6-8 3-8 7-8z" fill="#4fb2e8"/><circle cx="5" cy="4.500" r="1.500" fill="#e33"/><circle cx="9.500" cy="3.500" r="1.500" fill="#fb3"/><circle cx="4" cy="9" r="1.500" fill="#2a6"/><circle cx="7" cy="12" r="1.300" fill="#a3c"/><path d="M11.500 5h2.500v5h-2.500z" fill="#e9c48a"/><path d="M11.500 10h2.500l-.5 6h-1.500z" fill="#b5702a"/>',
    snip: '<path d="M0 0h12v13H0z" fill="#f4f4f4"/><path d="M2.500 2.500h7v7h-7z" fill="none" stroke="#d22" stroke-width="2" stroke-dasharray="1.800 1"/><path d="M8 8.500h6M11 6v5" stroke="#bbb" stroke-width="1.500"/><circle cx="14" cy="10" r="1.800" fill="none" stroke="#2f8ad0" stroke-width="1.400"/><circle cx="10.500" cy="14" r="1.800" fill="none" stroke="#2f8ad0" stroke-width="1.400"/>',
    cards: '<path d="M0 6l4-2 5 11-4 1zM3 4l4-1.500L10 15H7zM6 2.500L10 2v13z" fill="#eee" stroke="#555" stroke-width=".6"/><text x="7" y="12" font-size="15" font-weight="bold" font-style="italic" font-family="Liberation Sans" fill="#e02020">4</text>',
    up: '<path d="M2.500 11L8 5l5.500 6" fill="none" stroke="currentColor" stroke-width="1.800"/>',
    wifi: '<path d="M1 6.500c4-4.500 10-4.500 14 0M3.300 9c3-3 6.500-3 9.500 0M5.500 11.300c1.500-1.500 3.500-1.500 5 0" fill="none" stroke="#eee" stroke-width="1.300"/><circle cx="8" cy="13" r="1.400" fill="#eee"/>',
    vol: '<path d="M1 6h2.500L7 3v10L3.500 10H1zM9.500 6c1 1 1 3 0 4M11.500 4.500c2 2 2 5 0 7M13.500 3c3 3 3 7 0 10" fill="none" stroke="#eee" stroke-width="1.100"/>',
    bell: '<path d="M2 12.500l1.500-2V7c0-7 9-7 9 0v3.500l1.500 2zM6.500 14c.5 1.500 2.500 1.500 3 0" fill="none" stroke="#eee" stroke-width="1.200"/>',
    first: '<path d="M4 3v10M12 3v10L6 8z" fill="#888" stroke="#888"/>', back: '<path d="M11 3v10L5 8z" fill="#888"/>', fwd: '<path d="M5 3v10l6-5z" fill="#888"/>', last: '<path d="M12 3v10M4 3v10l6-5z" fill="#888" stroke="#888"/>',
  };
  const fileTools = [['doc', 'New'], ['open', 'Open'], ['save', 'Save'], ['print', 'Print'], ['undo', 'Undo'], ['redo', 'Redo']];
  const ann = ['aNew', 'aEdit', 'aGo', 'aAdd', 'aLight', 'aSave', 'aBox', 'aLink'];
  const ribbon = [
    { first: true, big: [['boss', ['Extruded', 'Boss/Base'], 54], ['revBoss', ['Revolved', 'Boss/Base'], 54]], lists: [{ w: 126, i: [['sweep', 'Swept Boss/Base'], ['loft', 'Lofted Boss/Base'], ['bound', 'Boundary Boss/Base']] }] },
    { big: [['cut', ['Extruded', 'Cut'], 50], ['hole', ['Hole', 'Wizard'], 42, 1], ['revCut', ['Revolved', 'Cut'], 50]], lists: [{ w: 98, i: [['sweepCut', 'Swept Cut'], ['loftCut', 'Lofted Cut'], ['boundCut', 'Boundary Cut']] }] },
    { big: [['fillet', ['Fillet'], 32, 1], ['pattern', ['Linear', 'Pattern'], 42, 1]], lists: [{ w: 58, i: [['rib', 'Rib'], ['draft', 'Draft'], ['shell', 'Shell']] }, { w: 73, i: [['wrap', 'Wrap'], ['intersect', 'Intersect'], ['mirror', 'Mirror']] }] },
    { big: [['refgeo', ['Reference', 'Geometry'], 54, 1], ['curves', ['Curves'], 42, 1]], lists: [] },
    { big: [['instant', ['Instant3D'], 54]], lists: [], on: true },
    { big: [['cutSurf', ['Cut', 'With', 'Surface'], 42], ['flex', ['Flex'], 28], ['sigma', ['Equations'], 54]], lists: [], last: true },
  ];
  const tabs = ['Features', 'Sketch', 'Surfaces', 'Sheet Metal', 'Weldments', 'Mold Tools', 'Mesh Modeling', 'Data Migration', 'Direct Editing', 'Markup', 'Evaluate', 'MBD Dimensions', 'SOLIDWORKS Add-Ins', 'MBD'];
  const tree = [['history', 'History', 1], ['sensor', 'Sensors'], ['annotF', 'Annotations', 1], ['cutlist', 'Cut list(12)', 1], ['eqF', 'Equations', 1], ['material', 'Plain Carbon Steel'], ['plane', 'Front Plane'], ['plane', 'Top Plane'], ['plane', 'Right Plane'], ['origin', 'Origin'], ['plane', 'Plane1'], ['sheet', 'Sheet-Metal', 1], ['base', 'Base-Flange1', 1], ['tab', 'Tab1', 1], ['base', 'Base-Flange2', 1], ['edge', 'Edge-Flange1', 1], ['cut', 'Cut-Extrude9', 1], ['base', 'Base-Flange3', 1], ['cut', 'Cut-Extrude1', 1], ['cut', 'Cut-Extrude2', 1], ['cut', 'Cut-Extrude3', 1], ['cut', 'Cut-Extrude4', 1], ['cut', 'Cut-Extrude10', 1], ['boss', 'Boss-Extrude1', 1], ['cut', 'Cut-Extrude6', 1], ['cut', 'Cut-Extrude8', 1], ['fillet', 'Fillet2'], ['fillet', 'Fillet3'], ['edge', 'Edge-Flange2', 1]];
  const side = ['wire', 'wire2', 'wire2', 'wire2', 'wire2', 'wire2', 'wire2', '|', 'sel', 'wrench', 'screen', '|', 'box2', 'box2', '|'];
  const viewTools = [['zoomFit'], ['zoomArea'], ['prev'], ['section'], ['annot'], ['orient', 1], ['display', 1], ['hexBlue'], ['cubeBlue'], ['eye', 1], ['ballEdit'], ['ballScene', 1], ['monitor', 1]];
  const filters = ['fVertex', 'fEdge', 'fFace', 'fSurf', 'fBody', 'fAxis', 'fPlane', 'fPoint', 'fSketch', 'fSeg', 'fMid', 'fCenter', 'fDim', 'fWeld', 'fSurfFin', 'fTol', 'fNote', 'fA', 'fBead', 'fCos', 'fZoomA', 'fDowel', 'fDatum', 'fMass', 'fConn', 'fConn2', 'fWedge', 'fWedge2', 'fWedge3'];
  const lineTools = ['gBoxEdit', 'gBox', 'gBrush', 'gLines', 'gDash', 'gSwap', 'colorAxis'];
  const apps = [['win'], ['explorer', 1], ['green', 1], ['acad', 1], ['sw', 2], ['app1'], ['app2'], ['camt', 1], ['whats', 1], ['chrome'], ['calc'], ['paint'], ['snip'], ['cards']];
  const taskPane = ['home', 'library', 'folderOpen', 'palette', 'globe', 'table'];
  const row = (n, x, y, dx, dy) => Array.from({ length: n }, (_, i) => [x + dx * i, y + dy * i]);
  const greenHoles = [...row(10, 330, 223, 80.6, -3), ...row(7, 229, 238, 3.4, 65), ...row(12, 450, 749, 56.5, -2.1), ...row(12, 457, 888, 56.4, -2.1), ...row(9, 1199, 700, 56.4, -2), ...row(9, 1206, 840, 56.4, -2)];
  const orangeHoles = [...row(7, 1182, 203, 3.3, 65), ...row(7, 1868, 152, 3.3, 65)];
  const ringHoles = [[391, 240], [444, 262], [478, 330], [482, 415], [455, 488], [406, 517], [354, 495], [319, 428], [315, 341], [343, 270]];
</script>

{#snippet icon(name, size = 16)}
  <svg class="ic" width={size} height={size} viewBox="0 0 16 16" aria-hidden="true">{@html ic[name]}</svg>
{/snippet}
{#snippet ring()}
  <ellipse cx="385" cy="380" rx="106" ry="168" fill="url(#rim)" stroke="#111" stroke-width="2.500" />
  <ellipse cx="400" cy="380" rx="101" ry="168" fill="#9799af" stroke="#111" stroke-width="2.500" />
  <ellipse cx="400" cy="378" rx="68" ry="112" fill="url(#bore)" stroke="#111" stroke-width="2.500" />
  <clipPath id="boreClip"><ellipse cx="400" cy="378" rx="68" ry="112" /></clipPath>
  <g clip-path="url(#boreClip)">
    <ellipse cx="381" cy="378" rx="68" ry="112" fill="#d97800" stroke="#111" stroke-width="2" />
    <ellipse cx="364" cy="378" rx="68" ry="112" fill="#368340" stroke="#111" stroke-width="2" />
    <path d="M430 374h20" stroke="#111" stroke-width="4" />
  </g>
  <ellipse cx="400" cy="378" rx="68" ry="112" fill="none" stroke="#111" stroke-width="3" />
  {#each ringHoles as [x, y]}<ellipse cx={x} cy={y} rx="6.500" ry="9.500" fill="#777990" stroke="#222" stroke-width="4" />{/each}
{/snippet}

<div class="app">
  <header class="title">
    <div class="brand">
      <svg width="13" height="22" viewBox="0 0 13 22" aria-hidden="true"><path d="M0 2c4-2 6 1 1 5M0 9c4 1 3 7-1 9M10 7c-6 0-5 4-3 5s2 5-4 5" fill="none" stroke="#d8252b" stroke-width="2.200" /></svg>
      <span class="logo"><b>SOLID</b>WORKS</span>
      <span class="rt"></span>
    </div>
    <button class="ib home" aria-label="Home">{@render icon('home')}</button>
    {#each fileTools as [n, l]}
      <button class="ib" aria-label={l}>{@render icon(n)}</button><button class="dd" class:dim={n === 'undo' || n === 'redo'} aria-label="{l} options"><i></i></button>
    {/each}
    <div class="pick"><button class="ib on" aria-label="Select">{@render icon('cursor')}</button><button class="dd" aria-label="Select options"><i></i></button></div>
    <button class="ib" aria-label="Rebuild">{@render icon('traffic')}</button>
    <button class="ib wide" aria-label="File properties">{@render icon('options')}</button>
    <button class="ib wide" aria-label="Options">{@render icon('gear')}</button><button class="dd" aria-label="Options menu"><i></i></button>
    <h1>M22</h1>
    <div class="wintools">
      <label class="search">{@render icon('prompt', 13)}<input placeholder="Search Commands" aria-label="Search Commands" />{@render icon('glass', 12)}<i class="tri dimtri"></i></label>
      <button aria-label="Account">{@render icon('user')}</button><button aria-label="Help">{@render icon('help')}</button>
      <button aria-label="Minimize">{@render icon('min', 14)}</button><button aria-label="Restore">{@render icon('restore', 14)}</button><button aria-label="Close">{@render icon('close', 14)}</button>
    </div>
  </header>

  <div class="macro">
    <div class="macroset">
      <button class="ib" aria-label="Run macro">{@render icon('play')}</button><button class="ib" aria-label="Stop macro">{@render icon('stop')}</button>
      <button class="ib rec" aria-label="Record macro">{@render icon('rec')}</button><button class="ib" aria-label="New macro">{@render icon('macroNew')}</button><button class="ib" aria-label="Edit macro">{@render icon('macroEdit')}</button>
    </div>
  </div>

  <div class="config">
    <div class="configset">
      <div class="selwrap"><select aria-label="Configuration"><option>Default&lt;As Machined&gt;</option></select></div>
      <div class="anns"><span class="grip"></span>{#each ann as n}<button class="ib" aria-label={n}>{@render icon(n)}</button>{/each}</div>
    </div>
  </div>

  <nav class="ribbon" aria-label="Features">
    {#each ribbon as g}
      <div class="group" class:first={g.first} class:last={g.last} class:active={g.on}>
        {#each g.big as [n, lines, w, d]}
          <button class="big w{w}">{@render icon(n)}{#each lines as t}<span>{t}</span>{/each}{#if d}<i class="tri"></i>{/if}</button>
        {/each}
        {#each g.lists as l}
          <div class="list" style:width="{l.w}px">{#each l.i as [n, t]}<button>{@render icon(n)}<span>{t}</span></button>{/each}</div>
        {/each}
      </div>
    {/each}
    <button class="collapse" aria-label="Collapse">{@render icon('up', 12)}</button>
  </nav>

  <main>
    <aside class="side">
      <span class="dots"></span>
      {#each side as n}{#if n === '|'}<hr />{:else}<button aria-label={n}>{@render icon(n)}</button>{/if}{/each}
    </aside>
    <section class="panel">
      <div class="handle"><span></span></div>
      <div class="ptabs">
        <button class="cur" aria-label="Feature tree">{@render icon('part')}</button><button aria-label="Properties">{@render icon('propTab')}</button><button aria-label="Configurations">{@render icon('configTab')}</button><button aria-label="Dimensions">{@render icon('target')}</button><button aria-label="Display">{@render icon('ball')}</button>
        <svg class="more" width="8" height="12" viewBox="0 0 8 12" aria-hidden="true"><path d="M2 1l4 5-4 5" fill="none" stroke="#222" stroke-width="1.800" /></svg>
      </div>
      <label class="pfilter">{@render icon('funnel')}<input aria-label="Filter tree" /></label>
      <div class="scroller">
        <ul>
          <li class="root">{@render icon('part')}<span>M22 (Default&lt;As Machined&gt;) &lt;&lt;Default&gt;_Display State 1&gt;</span></li>
          {#each tree as [n, t, e]}<li><i class:exp={e}></i>{@render icon(n)}<span>{t}</span></li>{/each}
        </ul>
        <div class="vbar"><span></span></div>
      </div>
      <div class="hbar"><span></span></div>
    </section>
    <section class="view">
      <button class="splitter" aria-label="Toggle panel"><span></span></button>
      <svg class="model" viewBox="287 184 1413 682" role="img" aria-label="Sheet metal assembly">
        <defs>
          <linearGradient id="rim" x1="0" x2="0" y1="0" y2="1"><stop offset="0" stop-color="#777a8c" /><stop offset=".55" stop-color="#3b3d48" /><stop offset=".7" stop-color="#85889b" /><stop offset="1" stop-color="#3d3f4a" /></linearGradient>
          <linearGradient id="bore" x1="0" x2="0" y1="0" y2="1"><stop offset="0" stop-color="#4d4f5c" /><stop offset=".5" stop-color="#85889b" /><stop offset="1" stop-color="#eaf4f6" /></linearGradient>
          <linearGradient id="lite" x1="0" x2="0" y1="0" y2="1"><stop offset="0" stop-color="#3a8f48" /><stop offset=".6" stop-color="#48bd60" /><stop offset="1" stop-color="#44b158" /></linearGradient>
          <filter id="soft"><feGaussianBlur stdDeviation="9" /></filter>
        </defs>
        <g transform="translate(500 390) scale(.3333333)" stroke-linejoin="round">
          <path d="M-195 902L0 887 200 872 270 866 398 860v22L270 884 60 893-195 906z" fill="#8c8c8c" /><path d="M205 885l190-14" stroke="#eee" stroke-width="4" stroke-dasharray="50 8" />
          <path d="M1730 807l100-4 55-4v4l-155 11zM1915 799h12v4h-12z" fill="#777" />
          <path d="M78 162l74-2 18 7 14 20 4 20 22 480-8 25-26 5-70 2-2-24 68-2 18-10 3-20-25-458-8-16-15-6-65 2z" fill="#8b8ea4" stroke="#111" stroke-width="3" />
          <path d="M186 156L1140 120l24 558-41 1 11 231-730 27-12-233-182 10z" fill="#368340" stroke="#111" stroke-width="3" />
          <path d="M152 160c20 15 26 25 28 45l24 458c-2 20-12 45-28 53M168 205h18M193 663h18M175 693v23" fill="none" stroke="#111" stroke-width="2" />
          <path d="M212 190l24 120 24 290 24 110-56 2z" fill="url(#lite)" />
          <path d="M190 157l22 556M203 157l25 555M258 154l26 556M293 183l27 526M262 155l31 28M1120 122l25 556M1140 122l24 556" fill="none" stroke="#111" stroke-width="2.500" />
          <path d="M293 183l827-30" stroke="#111" stroke-width="2.500" /><path d="M272 154l848-32v31l-817 30z" fill="#610c0f" stroke="#111" stroke-width="2" /><path d="M272 154l848-32v12l-830 32z" fill="#3e0709" />
          <path d="M1140 680l578-36 12 221-582 23z" fill="#368340" stroke="#111" stroke-width="3" /><path d="M1708 645l14 221" stroke="#111" stroke-width="3" />
          <path d="M1141 691a7 10 0 0 1 0 22M1148 830a7 10 0 0 1 2 24" fill="#2c6b36" stroke="#111" stroke-width="4" />
          <path d="M1123 679h18l9 228-16 3z" fill="#368340" stroke="#111" stroke-width="3" /><path d="M1134 680l10 228" stroke="#111" stroke-width="2" />
          <path d="M1143 165l14-32 22-12 65-4 651-42v15l-3 8 22 478 13 20h76l2 23-780 54-26 2-20-10-13-20z" fill="#dc7a00" stroke="#111" stroke-width="3" />
          <path d="M1143 165l14-32 22-12 65-4v15l-62 4-24 22-2 10 25 462 10 26 12 15-6 5-20-10-13-20z" fill="#b16400" />
          <path d="M1176 145l179-12v163l-177 11zM1355 130l345-30 190-7 6 163-190 14-200 20-151 10z" fill="#a25900" />
          <path d="M1244 117l540-38 108 18-2 18-188 14-2-22-345 26-112 6z" fill="#ad6000" />
          <path d="M1355 118l345-20v10l-345 30z" fill="#7a4300" />
          <path d="M1143 170l210-15M1353 135l2 105M1698 100l3 105M1158 165l24 463M1166 630l746-53M1182 628c0 20 10 26 24 26l795-56M1200 676v-22M1270 670v-20M1355 130l345-25M1700 130l190-16M1158 165c2-18 10-28 25-30h60M1700 125c0-20 5-26 25-28l165-12" fill="none" stroke="#111" stroke-width="3" />
          <path d="M1148 170l22 470" stroke="#111" stroke-width="2" />
          <g opacity=".55" fill="#5a3000" filter="url(#soft)"><ellipse cx="1445" cy="395" rx="114" ry="184" /><ellipse cx="1655" cy="380" rx="110" ry="184" /></g>
          <path d="M1244 117l191-12 2 19-193 12z" fill="#e58308" stroke="#111" stroke-width="2.500" />
          <path d="M78 138L640 92l200-9 500-21 632-22v5l-662 43-68 10z" fill="#fff" stroke="#111" stroke-width="2.500" />
          <path d="M80 137L500 107 350 122z" fill="#222" /><path d="M140 132l400-29M300 122l300-24" stroke="#222" stroke-width="4" stroke-dasharray="34 9 6 5" />
          <path d="M700 96l105-8v18l-90 5z" fill="#8d90a6" stroke="#111" stroke-width="2" /><path d="M805 88l40-3-20 22h-20z" fill="#8c1416" />
          <path d="M825 107l20-22 205-11 450-20 405-12v4L1310 90l-260 14z" fill="#f92528" stroke="#111" stroke-width="2.500" />
          <path d="M1310 88l595-42 2 21 69-3v22l-193 11v-17l-471 28z" fill="#e58308" stroke="#111" stroke-width="3" /><path d="M1312 108l594-41" stroke="#111" stroke-width="2.500" />
          <path d="M1500 60l250-12M1640 52l265-10" stroke="#111" stroke-width="4" />
          <path d="M1905 45l67-4 2 23-67 3z" fill="#dc2222" stroke="#111" stroke-width="3" />
          <path d="M78 138L830 107l412-12v23L78 162z" fill="#a81a1c" stroke="#111" stroke-width="3" /><path d="M1242 94l68-6v22l-68 7z" fill="#dc2222" stroke="#111" stroke-width="2.500" />
          {#each greenHoles as [x, y]}<ellipse cx={x} cy={y} rx="7.500" ry="10" fill="#2c6b36" stroke="#0d1f10" stroke-width="4" />{/each}
          {#each orangeHoles as [x, y]}<ellipse cx={x} cy={y} rx="7" ry="10" fill="#8a4c00" stroke="#1f1200" stroke-width="4" />{/each}
          <g transform="translate(1050 0)">{@render ring()}</g><g transform="translate(1259 -15)">{@render ring()}</g>
          <g stroke="#1414c8" stroke-width="4" fill="#1414c8"><path d="M1053 668l-2-70M1042 668h38M1045 660l16 16M1061 660l-16 16" /><path d="M1051 583l6 20h-12zM1090 668l-18-5v10z" /></g>
        </g>
        <path d="M323 815v-20" stroke="#17701c" stroke-width="3" /><path d="M322 787l4 9h-8z" fill="#17701c" />
        <path d="M324 815h14" stroke="#c81e1e" stroke-width="3" /><path d="M345 814l-9-4v8z" fill="#c81e1e" />
        <path d="M323 814l-8 1" stroke="#1414b4" stroke-width="3" /><circle cx="312" cy="815" r="3.500" fill="#1414b4" />
        <g font-family="Liberation Sans" font-size="8"><text x="319" y="782" fill="#3d9a3d">Y</text><text x="346" y="814" fill="#e05050">X</text><text x="301" y="817" fill="#1f5fc8">Z</text></g>
      </svg>
      <nav class="tabs" aria-label="Command tabs">{#each tabs as t, i}<button class:cur={i === 0}>{t}</button>{/each}</nav>
      <div class="hud">{#each viewTools as [n, d]}<button aria-label={n}>{@render icon(n)}</button>{#if d}<i class="tri dimtri"></i>{/if}{/each}</div>
      <div class="docwin"><button aria-label="Left pane">{@render icon('paneL', 14)}</button><button aria-label="Right pane">{@render icon('paneR', 14)}</button><button aria-label="Minimize document">{@render icon('min', 14)}</button><button aria-label="Restore document">{@render icon('restore', 14)}</button><button aria-label="Close document">{@render icon('close', 14)}</button></div>
      <div class="taskpane">{#each taskPane as n}<button aria-label={n}>{@render icon(n)}</button>{/each}</div>
    </section>
  </main>

  <div class="mtabs">
    <span class="nav">{#each ['first', 'back', 'fwd', 'last'] as n}<button aria-label={n}>{@render icon(n, 10)}</button>{/each}</span>
    <button class="cur">Model</button><button>3D Views</button><button class="wide">Motion Study 1</button>
  </div>

  <div class="fbar">
    <button class="ib" aria-label="Clear filters">{@render icon('filterAll')}</button><button class="ib" aria-label="All filters">{@render icon('filterMany')}</button><button class="ib" aria-label="Invert filters">{@render icon('filterPurple')}</button>
    <div class="pick"><button class="ib on" aria-label="Select">{@render icon('cursor')}</button><button class="dd" aria-label="Select options"><i></i></button></div>
    <button class="ib" aria-label="Select over">{@render icon('cursors')}</button>
    <span class="vsep"></span>
    <div class="filters">{#each filters as n}<button aria-label={n}><svg class="ic" width="17" height="17" viewBox="0 0 17 17" aria-hidden="true">{@html ic[n]}</svg></button>{/each}</div>
    <div class="lines"><span class="grip"></span>{#each lineTools as n}<button class="ib" aria-label={n}>{@render icon(n)}</button>{/each}</div>
  </div>

  <footer class="status"><span>SOLIDWORKS Premium 2023 SP0.1</span><span class="units">MMGS <i></i></span><span class="mark">{@render icon('gear', 14)}</span></footer>

  <div class="taskbar">
    <div class="apps">{#each apps as [n, st]}<button class:run={st} class:focus={st === 2} aria-label={n}>{@render icon(n, 21)}</button>{/each}</div>
    <div class="tray">{@render icon('up', 12)}<span class="lang">ENG</span>{@render icon('wifi', 15)}{@render icon('vol', 16)}<span class="clock">3:25 PM<br />2/26/2024</span>{@render icon('bell', 14)}</div>
    <span class="watermark" lang="ar" dir="rtl">خمسات</span>
  </div>
</div>

<style>
  :global(body) { margin: 0; overflow: hidden; }
  .app, .app * { box-sizing: border-box; }
  .app { height: 100vh; display: flex; flex-direction: column; overflow: hidden; background: #f7f7f7; color: #111; font: 10px/12px "Open Sans", "Noto Sans", sans-serif; }
  button { font: inherit; color: inherit; background: none; border: 0; padding: 0; margin: 0; display: flex; align-items: center; justify-content: center; }
  input { font: inherit; border: 0; background: none; padding: 0; min-width: 0; outline: 0; }
  .ic { display: block; flex: none; }
  .title { height: 32px; flex: none; display: flex; align-items: center; border-top: 1px solid #bbb; border-bottom: 1px solid #c6c6c6; position: relative; }
  .brand { width: 116px; height: 100%; border-right: 1px solid #c6c6c6; display: flex; align-items: center; flex: none; color: #d8252b; }
  .logo { font: italic 12px/14px Lato, sans-serif; width: 91px; padding-left: 2px; white-space: nowrap; }
  .logo b { font-weight: 900; }
  .rt { border-left: 5px solid #888; border-top: 4px solid transparent; border-bottom: 4px solid transparent; }
  .ib { width: 24px; height: 24px; flex: none; }
  .ib.wide { width: 27px; }
  .home { margin: 0 3px 0 20px; }
  .dd { width: 15px; height: 24px; flex: none; }
  .dd i, .tri { width: 0; border: 3px solid transparent; border-top: 3px solid #333; border-bottom: 0; flex: none; }
  .dim i, .dimtri { border-top-color: #999; }
  .pick { display: flex; margin: 0 1px 0 2px; height: 28px; border: 1px solid #8a8a8a; flex: none; }
  .pick .ib { height: 26px; background: #b1b1b1; border-right: 1px solid #8a8a8a; width: 26px; }
  .pick .dd { height: 26px; width: 12px; background: #f7f7f7; }
  .title h1 { font: inherit; margin: 0; position: absolute; left: 50%; width: 196px; text-align: center; }
  .wintools { margin-left: auto; display: flex; align-items: center; color: #333; }
  .wintools button { width: 33px; height: 28px; }
  .wintools button:last-child { width: 24px; margin-right: -4px; }
  .search { width: 181px; height: 21px; border: 1px solid #bbb; background: #fff; display: flex; align-items: center; gap: 5px; padding: 0 4px 0 5px; margin-right: 2px; }
  .search input { flex: 1; } .search input::placeholder { color: #555; opacity: 1; }
  .macro { height: 28px; flex: none; }
  .macroset { width: 129px; height: 100%; border-right: 1px solid #a0a0a0; display: flex; align-items: center; }
  .macroset .rec { background: #fff; border: 1px solid #bbb; }
  .config { height: 30px; flex: none; border-bottom: 1px solid #c6c6c6; }
  .configset { width: 401px; height: 29px; display: flex; border: 1px solid #a0a0a0; border-width: 1px 1px 0 0; }
  .selwrap { width: 187px; border-right: 1px solid #a0a0a0; padding: 3px 7px 3px 0; display: flex; position: relative; }
  select { flex: 1; font: inherit; color: #111; border: 1px solid #b4b4b4; background: #fff; padding: 0 2px; appearance: none; }
  .selwrap::after { content: ""; position: absolute; right: 12px; top: 9px; width: 5px; height: 5px; border: solid #666; border-width: 0 1px 1px 0; transform: rotate(45deg); }
  .grip { width: 3px; border-left: 2px dotted #999; margin: 3px 7px 3px 3px; flex: none; }
  .anns, .lines { display: flex; align-items: center; } .grip { align-self: stretch; }
  .ribbon { height: 73px; flex: none; display: flex; border-bottom: 1px solid #a6a6a6; position: relative; padding-top: 1px; }
  .group { display: flex; border-right: 1px solid #ccc; height: 70px; margin-right: 1px; flex: none; }
  .first { margin-left: -7px; } .last { border: 0; }
  .active { background: #b1b1b1; border: 1px solid #7a7a7a; margin-right: 3px; }
  .active .big { margin: -1px; }
  .big { flex-direction: column; justify-content: flex-start; padding-top: 5px; position: relative; white-space: nowrap; }
  .big .ic { margin-bottom: 2px; } .big span { line-height: 12px; }
  .big .tri { position: absolute; bottom: 9px; left: calc(50% - 3px); }
  .w54 { width: 54px; } .w50 { width: 50px; } .w42 { width: 42px; } .w32 { width: 32px; } .w28 { width: 28px; }
  .list { display: flex; flex-direction: column; justify-content: space-between; padding-left: 3px; }
  .list button { height: 23px; gap: 6px; justify-content: flex-start; white-space: nowrap; }
  .collapse { position: absolute; right: -7px; bottom: 4px; }
  main { flex: 1; display: flex; min-height: 0; padding-top: 20px; position: relative; }
  .tabs { position: absolute; left: 0; top: 0; display: flex; height: 21px; border-bottom: 1px solid #777; z-index: 2; }
  .tabs button { min-width: 50px; padding: 0 7px; border-right: 1px solid #777; white-space: nowrap; background: #d2d2d2; color: #222; }
  .tabs button:nth-child(n + 4) { padding-right: 8px; } .tabs button:nth-child(4) { padding-left: 8px; } .tabs button:nth-child(3) { padding: 0 8px; }
  .tabs .cur { background: #f7f7f7; font-weight: bold; margin-left: -13px; width: 58px; padding-left: 9px; height: 21px; }
  .side { width: 16px; flex: none; overflow: hidden; }
  .side button { width: 16px; height: 23px; margin: 0 0 0 -6px; } .side hr { border: 0; border-top: 1px solid #999; margin: 3px 2px 4px 0; }
  .dots { display: block; height: 9px; border-top: 2px dotted #999; margin: 3px 2px 0 0; width: 14px; }
  .panel { width: 271px; flex: none; display: flex; flex-direction: column; border-left: 1px solid #bbb; border-right: 2px solid #bbb; padding: 0 2px 0 0; min-height: 0; }
  .handle { height: 18px; border: solid #c6c6c6; border-width: 1px 0; display: flex; align-items: center; justify-content: center; margin-bottom: 4px; padding-top: 4px; flex: none; border-top-color: #8db8c0; }
  .handle span, .splitter span { width: 5px; height: 5px; border: 1px solid #888; border-radius: 50%; }
  .ptabs { display: flex; height: 23px; border-top: 1px solid #888; border-bottom: 1px solid #aaa; flex: none; align-items: stretch; }
  .ptabs button { width: 36px; background: #cfcfcf; border-right: 1px solid #999; } .ptabs .cur { background: #f7f7f7; margin-bottom: -1px; }
  .more { margin: 4px 6px 0 auto; }
  .pfilter { height: 23px; flex: none; margin: 1px 3px 1px 4px; border: 1px solid #c2c2c2; display: flex; align-items: center; padding-left: 1px; } .pfilter input { flex: 1; }
  .scroller { flex: 1; min-height: 0; display: flex; background: #efefef; }
  ul { list-style: none; margin: 0; padding: 0; width: 253px; display: flex; flex-direction: column; overflow: hidden; background: #f7f7f7; }
  li { flex: 1; min-height: 0; display: flex; align-items: center; white-space: nowrap; gap: 5px; padding-left: 9px; }
  li.root { padding-left: 4px; gap: 4px; }
  li i { width: 9px; height: 8px; flex: none; } li .ic { overflow: visible; }
  li i.exp { width: 4px; margin-right: 5px; border-left: 4px solid #666; border-top: 4px solid transparent; border-bottom: 4px solid transparent; height: 0; }
  .vbar { flex: 1; padding: 15px 0 0 7px; } .vbar span { display: block; width: 2px; height: 77%; background: #888; }
  .hbar { height: 17px; flex: none; background: #efefef; padding: 8px 0 0 16px; border-bottom: 1px solid #bbb; margin-bottom: 3px; } .hbar span { display: block; width: 183px; height: 2px; background: #888; }
  .view { flex: 1; min-width: 0; background: #fff; margin-top: -20px; padding-top: 20px; display: flex; }
  .view .model { flex: 1; width: 100%; min-width: 0; min-height: 0; display: block; }
  .splitter { position: absolute; left: 286px; top: 334px; width: 8px; height: 36px; border: 1px solid #aaa; border-left: 0; background: #f7f7f7; z-index: 1; }
  .hud { position: absolute; left: 817px; top: 24px; display: flex; align-items: center; height: 20px; opacity: .85; }
  .hud button { width: 23px; padding-right: 5px; } .hud .tri { margin: 0 6px 0 2px; }
  .docwin { position: absolute; right: -5px; top: 5px; display: flex; color: #888; height: 20px; } .docwin button { width: 23px; }
  .taskpane { position: absolute; right: 0; top: 70px; width: 12px; border: 1px solid #999; border-right: 0; overflow: hidden; }
  .taskpane button { width: 17px; height: 21px; padding-right: 0; background: #d2d2d2; border-bottom: 1px solid #999; justify-content: flex-start; padding-left: 1px; } .taskpane button:first-child { background: #fff; height: 22px; }
  .mtabs { height: 14px; flex: none; display: flex; padding-left: 40px; border-top: 1px solid #999; }
  .mtabs > button { padding: 0 9px; background: #d2d2d2; border-right: 1px solid #999; height: 13px; } .mtabs .cur { background: #f7f7f7; font-weight: bold; padding: 0 10px; } .mtabs .wide { padding-right: 16px; }
  .nav { display: flex; width: 60px; background: #a8a8a8; border-top: 1px solid #222; } .nav button { flex: 1; border-right: 1px solid #888; }
  .fbar { height: 31px; flex: none; display: flex; align-items: center; border-bottom: 1px solid #999; padding-top: 2px; }
  .fbar .pick { height: 24px; margin: 0; } .fbar .pick .ib, .fbar .pick .dd { height: 22px; }
  .fbar .pick .ib { width: 25px; }
  .vsep { width: 1px; height: 20px; background: #999; margin: 0 6px 0 2px; }
  .filters { width: 703px; display: grid; grid-template-columns: repeat(29, 1fr); margin: 0 6px 0 0; }
  .lines { height: 29px; border: solid #999; border-width: 0 1px; width: 190px; }
  .status { height: 16px; flex: none; display: flex; align-items: center; } .status span:first-child { margin-left: -10px; }
  .units { margin-left: auto; width: 75px; display: flex; align-items: center; justify-content: space-between; padding-right: 21px; } .units i { border: 3px solid transparent; border-bottom: 3px solid #333; border-top: 0; }
  .mark { width: 7px; overflow: hidden; }
  .taskbar { height: 43px; flex: none; background: #212121; display: flex; align-items: center; justify-content: center; position: relative; color: #f2f2f2; }
  .apps { width: 553px; display: grid; grid-template-columns: repeat(14, 1fr); justify-items: center; }
  .apps button { width: 35px; height: 37px; position: relative; border-radius: 3px; } .apps .focus { background: #2e2e2e; }
  .apps .run::after { content: ""; position: absolute; bottom: 0; width: 6px; height: 3px; border-radius: 2px; background: #999; } .apps .focus::after { width: 14px; background: #4cc2ff; }
  .tray { position: absolute; right: 6px; display: flex; align-items: center; } .lang { margin: 0 16px 0 18px; } .tray .ic + .ic { margin-left: 7px; }
  .clock { width: 63px; text-align: right; margin: 0 7px 0 0; line-height: 14px; }
  .watermark { position: absolute; left: 748px; bottom: 19px; width: 202px; font: bold 54px/52px "DejaVu Sans", sans-serif; color: rgba(190, 190, 190, .4); white-space: nowrap; pointer-events: none; }
</style>
